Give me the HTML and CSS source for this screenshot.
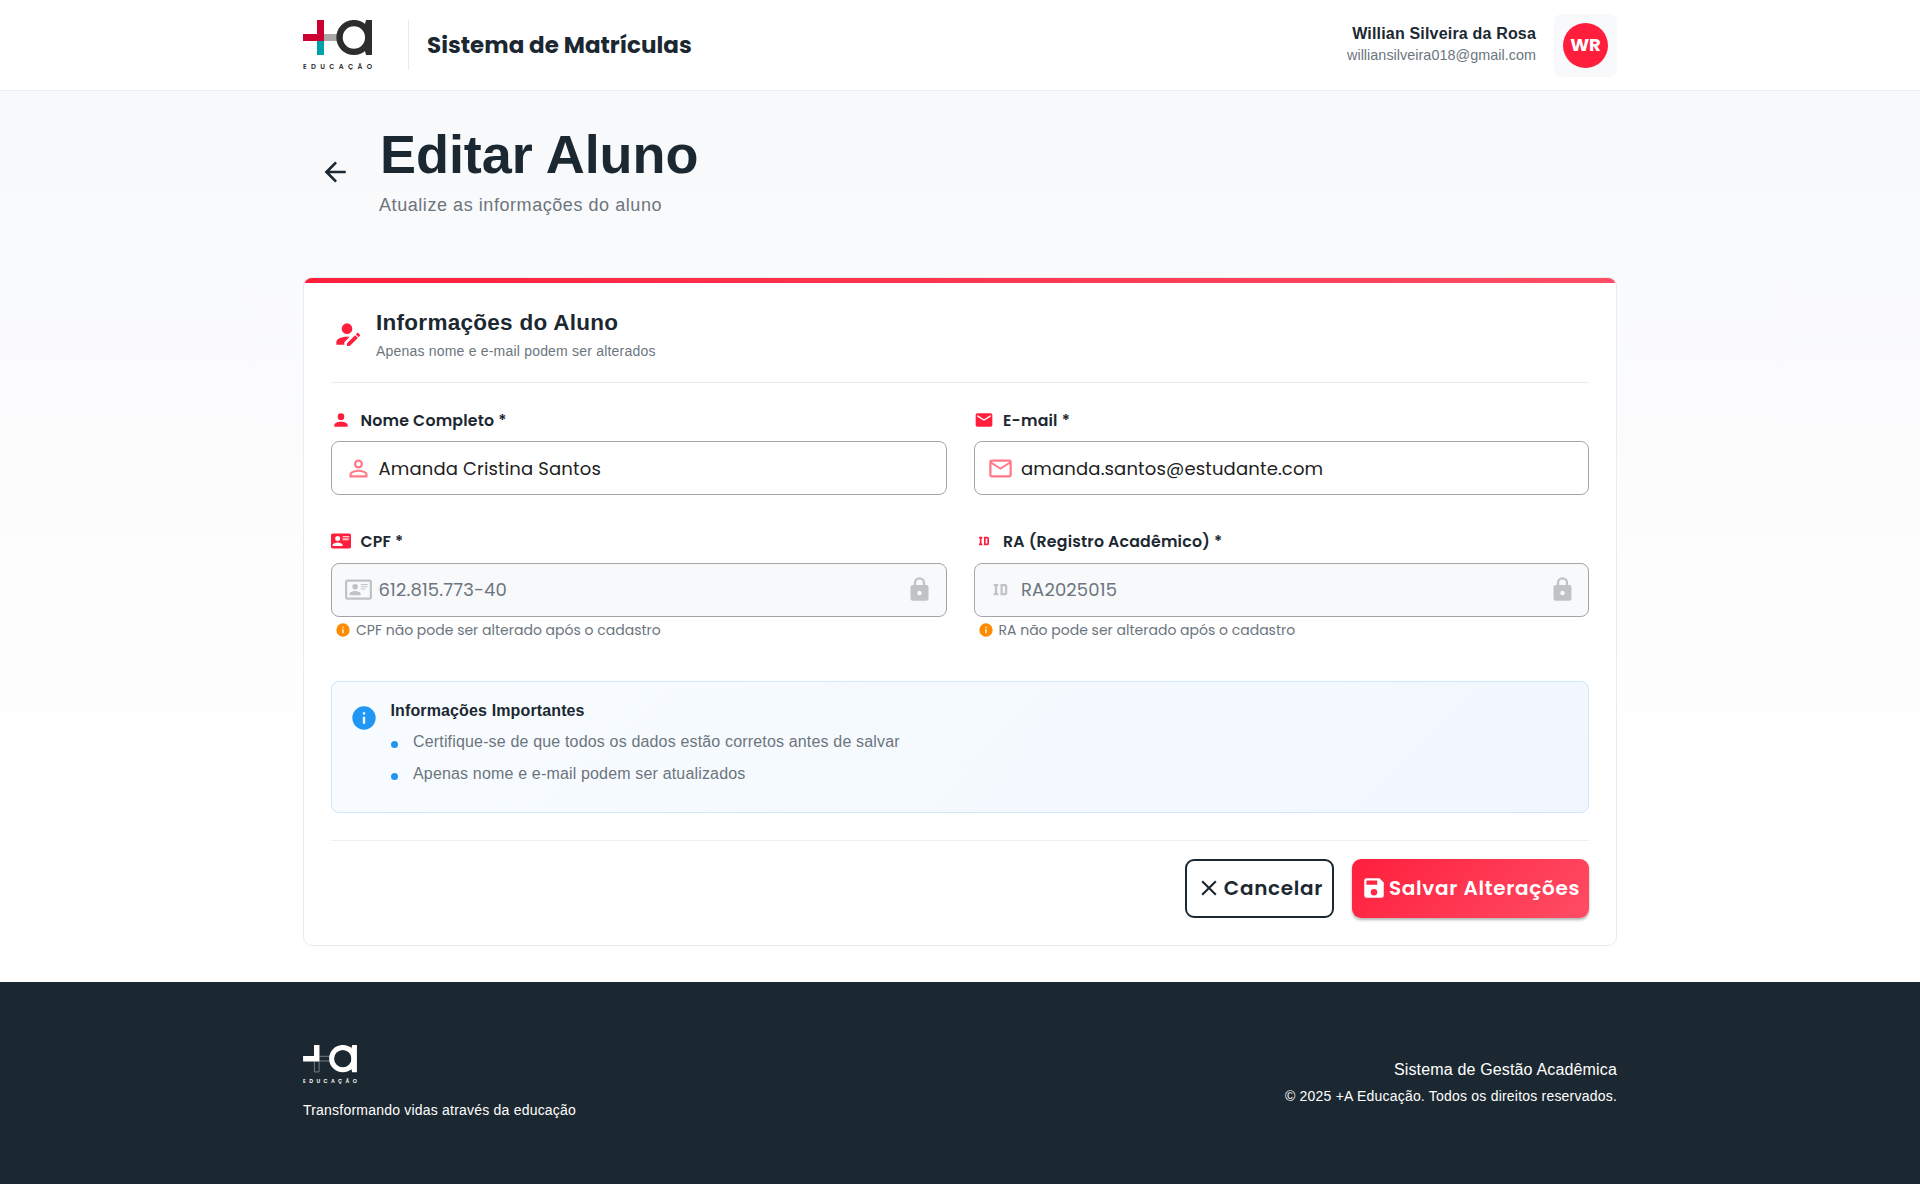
FILE: index.html
```html
<!DOCTYPE html>
<html lang="pt-BR">
<head>
<meta charset="utf-8">
<title>Editar Aluno - Sistema de Matrículas</title>
<link rel="stylesheet" href="styles.css">
</head>
<body>
<header class="topbar">
  <div class="container topbar-inner">
    <svg class="logo" viewBox="0 0 69 50" role="img" aria-label="+A Educação">
      <path fill="#a9a7a7" d="M21 14h14v7H21z"/>
      <path fill="#00a0a8" d="M14 21h7v14h-7z"/>
      <path fill="#cc0033" d="M14 0h7v21H0v-7h14z"/>
      <circle cx="50.9" cy="17.5" r="14.35" fill="none" stroke="#2d2d2d" stroke-width="6.4"/>
      <path fill="#2d2d2d" d="M62 4l1-4h6v35h-6l-1-4z"/>
      <text class="logo-word" x="0" y="49" textLength="69" fill="#2d2d2d">EDUCAÇÃO</text>
    </svg>
    <div class="topbar-divider"></div>
    <div class="system-name">Sistema de Matrículas</div>
    <div class="user">
      <div class="user-text">
        <div class="user-name">Willian Silveira da Rosa</div>
        <div class="user-mail">williansilveira018@gmail.com</div>
      </div>
      <div class="avatar-box"><div class="avatar">WR</div></div>
    </div>
  </div>
</header>

<main class="page">
  <div class="container">
    <div class="page-head">
      <button class="back" aria-label="Voltar"><svg viewBox="0 0 24 24"><path d="M20,11V13H8L13.5,18.5L12.08,19.92L4.16,12L12.08,4.08L13.5,5.5L8,11H20Z"/></svg></button>
      <div>
        <h1>Editar Aluno</h1>
        <p class="page-sub">Atualize as informações do aluno</p>
      </div>
    </div>

    <section class="card">
      <div class="card-bar"></div>
      <div class="card-body">
        <div class="card-head">
          <svg viewBox="0 0 24 24"><path d="M21.7,13.35L20.7,14.35L18.65,12.3L19.65,11.3C19.86,11.09 20.21,11.09 20.42,11.3L21.7,12.58C21.91,12.79 21.91,13.14 21.7,13.35M12,18.94L18.06,12.88L20.11,14.93L14.06,21H12V18.94M12,14C7.58,14 4,15.79 4,18V20H10V18.11L14,14.11C13.34,14.03 12.67,14 12,14M12,4A4,4 0 0,0 8,8A4,4 0 0,0 12,12A4,4 0 0,0 16,8A4,4 0 0,0 12,4Z"/></svg>
          <div>
            <h2>Informações do Aluno</h2>
            <p class="card-sub">Apenas nome e e-mail podem ser alterados</p>
          </div>
        </div>

        <div class="fields">
          <div class="field">
            <div class="label"><svg viewBox="0 0 24 24"><path d="M12,4A4,4 0 0,1 16,8A4,4 0 0,1 12,12A4,4 0 0,1 8,8A4,4 0 0,1 12,4M12,14C16.42,14 20,15.79 20,18V20H4V18C4,15.79 7.58,14 12,14Z"/></svg><span>Nome Completo *</span></div>
            <div class="input"><svg viewBox="0 0 24 24"><path d="M12,4A4,4 0 0,1 16,8A4,4 0 0,1 12,12A4,4 0 0,1 8,8A4,4 0 0,1 12,4M12,6A2,2 0 0,0 10,8A2,2 0 0,0 12,10A2,2 0 0,0 14,8A2,2 0 0,0 12,6M12,13C14.67,13 20,14.33 20,17V20H4V17C4,14.33 9.33,13 12,13M12,14.9C9.03,14.9 5.9,16.36 5.9,17V18.1H18.1V17C18.1,16.36 14.97,14.9 12,14.9Z"/></svg><span>Amanda Cristina Santos</span></div>
          </div>
          <div class="field">
            <div class="label"><svg viewBox="0 0 24 24"><path d="M20,8L12,13L4,8V6L12,11L20,6M20,4H4C2.89,4 2,4.89 2,6V18A2,2 0 0,0 4,20H20A2,2 0 0,0 22,18V6C22,4.89 21.1,4 20,4Z"/></svg><span>E-mail *</span></div>
            <div class="input"><svg viewBox="0 0 24 24"><path d="M22 6C22 4.9 21.1 4 20 4H4C2.9 4 2 4.9 2 6V18C2 19.1 2.9 20 4 20H20C21.1 20 22 19.1 22 18V6M20 6L12 11L4 6H20M20 18H4V8L12 13L20 8V18Z"/></svg><span>amanda.santos@estudante.com</span></div>
          </div>
          <div class="field field-locked">
            <div class="label"><svg viewBox="0 0 24 24"><path d="M2,3H22C23.05,3 24,3.95 24,5V19C24,20.05 23.05,21 22,21H2C0.95,21 0,20.05 0,19V5C0,3.95 0.95,3 2,3M14,6V7H22V6H14M14,8V9H22V8H14M14,10V11H21V10H14M8,13.91C6,13.91 2,15 2,17V18H14V17C14,15 10,13.91 8,13.91M8,6A3,3 0 0,0 5,9A3,3 0 0,0 8,12A3,3 0 0,0 11,9A3,3 0 0,0 8,6Z"/></svg><span>CPF *</span></div>
            <div class="input"><svg viewBox="0 0 24 24"><path d="M22,3H2C0.91,3.04 0.04,3.91 0,5V19C0.04,20.09 0.91,20.96 2,21H22C23.09,20.96 23.96,20.09 24,19V5C23.96,3.91 23.09,3.04 22,3M22,19H2V5H22V19M14,17V15.75C14,14.09 10.66,13.25 9,13.25C7.34,13.25 4,14.09 4,15.75V17H14M9,7A2.5,2.5 0 0,0 6.5,9.5A2.5,2.5 0 0,0 9,12A2.5,2.5 0 0,0 11.5,9.5A2.5,2.5 0 0,0 9,7M14,7V8H20V7H14M14,9V10H20V9H14M14,11V12H18V11H14"/></svg><span>612.815.773-40</span><svg class="lock" viewBox="0 0 24 24"><path d="M12,17A2,2 0 0,0 14,15C14,13.89 13.1,13 12,13A2,2 0 0,0 10,15A2,2 0 0,0 12,17M18,8A2,2 0 0,1 20,10V20A2,2 0 0,1 18,22H6A2,2 0 0,1 4,20V10C4,8.89 4.9,8 6,8H7V6A5,5 0 0,1 12,1A5,5 0 0,1 17,6V8H18M12,3A3,3 0 0,0 9,6V8H15V6A3,3 0 0,0 12,3Z"/></svg></div>
            <div class="hint"><svg viewBox="0 0 24 24"><path d="M13,9H11V7H13M13,17H11V11H13M12,2A10,10 0 0,0 2,12A10,10 0 0,0 12,22A10,10 0 0,0 22,12A10,10 0 0,0 12,2Z"/></svg><span>CPF não pode ser alterado após o cadastro</span></div>
          </div>
          <div class="field field-locked">
            <div class="label"><svg viewBox="0 0 24 24"><path d="M10 7V9H9V15H10V17H6V15H7V9H6V7H10M16 7C17.11 7 18 7.9 18 9V15C18 16.11 17.11 17 16 17H12V7M16 9H14V15H16V9Z"/></svg><span>RA (Registro Acadêmico) *</span></div>
            <div class="input"><svg viewBox="0 0 24 24"><path d="M10 7V9H9V15H10V17H6V15H7V9H6V7H10M16 7C17.11 7 18 7.9 18 9V15C18 16.11 17.11 17 16 17H12V7M16 9H14V15H16V9Z"/></svg><span>RA2025015</span><svg class="lock" viewBox="0 0 24 24"><path d="M12,17A2,2 0 0,0 14,15C14,13.89 13.1,13 12,13A2,2 0 0,0 10,15A2,2 0 0,0 12,17M18,8A2,2 0 0,1 20,10V20A2,2 0 0,1 18,22H6A2,2 0 0,1 4,20V10C4,8.89 4.9,8 6,8H7V6A5,5 0 0,1 12,1A5,5 0 0,1 17,6V8H18M12,3A3,3 0 0,0 9,6V8H15V6A3,3 0 0,0 12,3Z"/></svg></div>
            <div class="hint"><svg viewBox="0 0 24 24"><path d="M13,9H11V7H13M13,17H11V11H13M12,2A10,10 0 0,0 2,12A10,10 0 0,0 12,22A10,10 0 0,0 22,12A10,10 0 0,0 12,2Z"/></svg><span>RA não pode ser alterado após o cadastro</span></div>
          </div>
        </div>

        <div class="notice">
          <svg viewBox="0 0 24 24"><path d="M13,9H11V7H13M13,17H11V11H13M12,2A10,10 0 0,0 2,12A10,10 0 0,0 12,22A10,10 0 0,0 22,12A10,10 0 0,0 12,2Z"/></svg>
          <div>
            <h3>Informações Importantes</h3>
            <ul>
              <li>Certifique-se de que todos os dados estão corretos antes de salvar</li>
              <li>Apenas nome e e-mail podem ser atualizados</li>
            </ul>
          </div>
        </div>

        <div class="actions">
          <button class="btn btn-cancel"><svg viewBox="0 0 24 24"><path d="M19,6.41L17.59,5L12,10.59L6.41,5L5,6.41L10.59,12L5,17.59L6.41,19L12,13.41L17.59,19L19,17.59L13.41,12L19,6.41Z"/></svg><span>Cancelar</span></button>
          <button class="btn btn-save"><svg viewBox="0 0 24 24"><path d="M15,9H5V5H15M12,19A3,3 0 0,1 9,16A3,3 0 0,1 12,13A3,3 0 0,1 15,16A3,3 0 0,1 12,19M17,3H5C3.89,3 3,3.9 3,5V19A2,2 0 0,0 5,21H19A2,2 0 0,0 21,19V7L17,3Z"/></svg><span>Salvar Alterações</span></button>
        </div>
      </div>
    </section>
  </div>
</main>

<footer class="footer">
  <div class="container footer-inner">
    <div class="footer-brand">
      <svg class="footer-logo" viewBox="0 0 69 50" role="img" aria-label="+A Educação">
        <path fill="none" stroke="#8d9499" stroke-width="1" d="M21 14.5h14M21 20.5h14M14.5 21v13.5h6V21"/>
        <path fill="#fff" d="M14 0h7v21H0v-7h14z"/>
        <circle cx="50.9" cy="17.5" r="14.35" fill="none" stroke="#fff" stroke-width="6.4"/>
        <path fill="#fff" d="M62 4l1-4h6v35h-6l-1-4z"/>
        <text class="logo-word" x="0" y="49" textLength="69" fill="#fff">EDUCAÇÃO</text>
      </svg>
      <p class="tagline">Transformando vidas através da educação</p>
    </div>
    <div class="footer-legal">
      <p class="legal-title">Sistema de Gestão Acadêmica</p>
      <p class="legal-copy">© 2025 +A Educação. Todos os direitos reservados.</p>
    </div>
  </div>
</footer>
</body>
</html>
```
FILE: styles.css
```css
* { box-sizing: border-box; }
body {
  margin: 0;
  min-height: 1184px;
  display: flex;
  flex-direction: column;
  font-family: "Liberation Sans", Arial, sans-serif;
  color: #1c2831;
  background: #fff;
}
h1, h2, h3, p, ul { margin: 0; padding: 0; }
svg { display: block; flex: none; fill: currentColor; }
button { font: inherit; color: inherit; background: none; border: 0; padding: 0; }
.container { width: 1314px; margin: 0 auto; }

.system-name, .avatar, .label, .input, .hint, .btn, .logo-word {
  font-family: Poppins, Inter, sans-serif;
  font-feature-settings: "cv11";
}

/* Header */
.topbar { background: #fff; border-bottom: 1px solid #e9ecef; }
.topbar-inner { height: 90px; display: flex; align-items: center; }
.logo { width: 69px; height: 50px; }
.logo-word { font-size: 6.8px; font-weight: 600; }
.topbar-divider { width: 1px; height: 50px; margin: 0 18px 0 36px; background: #e9ecef; }
.system-name { font-size: 23px; font-weight: 700; line-height: 30px; }
.user { margin-left: auto; display: flex; align-items: center; gap: 18px; }
.user-text { text-align: right; padding-bottom: 2px; }
.user-name { font-size: 16px; font-weight: 700; line-height: 22px; letter-spacing: 0.18px; }
.user-mail { font-size: 14.4px; line-height: 21px; color: #6c757d; letter-spacing: 0.03px; }
.avatar-box { width: 63px; height: 63px; border-radius: 8px; background: #f8f9fb; display: grid; place-items: center; }
.avatar {
  width: 45px; height: 45px; border-radius: 50%;
  background: #ff1f3d; color: #fff;
  display: grid; place-items: center;
  font-size: 18px; font-weight: 700; line-height: 1;
}

/* Page heading */
.page { height: 891px; padding-top: 31px; background: linear-gradient(180deg, #f8f9fb 0%, #fff 85%); }
.page-head { display: flex; align-items: center; gap: 12px; height: 96px; margin-bottom: 59px; }
.back { width: 64px; height: 64px; display: grid; place-items: center; margin-top: 4px; }
.back svg { width: 32px; height: 32px; }
h1 { font-size: 54px; line-height: 65px; font-weight: 700; padding-left: 1px; letter-spacing: -0.05px; }
.page-sub { font-size: 18px; line-height: 26px; margin-top: 5px; color: #6c757d; letter-spacing: 0.56px; }

/* Card */
.card { height: 669px; border: 1px solid #e9ecef; border-radius: 9px; background: #fff; overflow: hidden; }
.card-bar { height: 5px; background: linear-gradient(90deg, #ff1f3d, #ff4d65); }
.card-body { padding: 25px 27px 0; }
.card-head { display: flex; align-items: center; gap: 13px; padding-bottom: 21px; border-bottom: 1px solid #e9ecef; }
.card-head svg { width: 32px; height: 32px; margin-bottom: 2px; color: #ff1f3d; }
h2 { font-size: 22.5px; line-height: 28px; padding-top: 1px; letter-spacing: 0.28px; }
.card-sub { font-size: 14px; line-height: 20px; margin-top: 4px; color: #6c757d; letter-spacing: 0.2px; }

/* Fields */
.fields { display: grid; grid-template-columns: 1fr 1fr; gap: 34px 27px; padding-top: 25px; }
.label { display: flex; align-items: center; gap: 9.5px; height: 24px; margin-bottom: 9px; font-size: 15.75px; font-weight: 600; letter-spacing: 0.2px; }
.label svg { width: 20px; height: 20px; color: #ff1f3d; }
.input {
  height: 54px; padding: 0 12.5px; display: flex; align-items: center; gap: 7px;
  border: 1px solid #a3a5a7; border-radius: 8px; background: #fff; color: #212121;
  font-size: 18px; letter-spacing: 0.15px;
}
.input span { padding-top: 1px; }
.input svg { width: 27px; height: 27px; color: #ff7989; }
.field-locked .label { margin-bottom: 10px; }
.field-locked .input { background: #f8f9fb; color: #6c757d; }
.field-locked .input span { padding: 0 0 1px; }
.field-locked .input svg { color: #c1c2c3; margin-bottom: 1px; }
.field-locked .input .lock { margin-left: auto; }
.hint { display: flex; align-items: center; gap: 5px; height: 20px; margin: 3px 0 0 4px; font-size: 14px; color: #6c757d; }
.hint svg { width: 16px; height: 16px; color: #ff8c00; }

/* Notice */
.notice {
  display: flex; gap: 13px; height: 132px; margin-top: 41px; padding: 17px 18px;
  border: 1px solid #cfe7fb; border-radius: 8px;
  background: linear-gradient(135deg, #f8fcff 0%, #f2f7ff 100%);
}
.notice svg { width: 28px; height: 28px; margin: 5px 0 0 -0.5px; color: #2196f3; }
h3 { font-size: 16px; line-height: 24px; letter-spacing: 0.13px; }
.notice ul { list-style: none; margin-top: 3px; }
.notice li { display: flex; align-items: center; gap: 15.5px; line-height: 32px; font-size: 16px; color: #6c757d; letter-spacing: 0.165px; }
.notice li::before { content: ""; width: 7px; height: 7px; margin-top: 5px; border-radius: 50%; background: #2196f3; }

/* Actions */
.actions { display: flex; justify-content: flex-end; gap: 18px; margin-top: 27px; padding-top: 18px; border-top: 1px solid #eceef0; }
.btn { height: 59px; display: flex; align-items: center; justify-content: center; gap: 2px; border-radius: 9px; font-size: 20px; font-weight: 600; white-space: nowrap; }
.btn span { padding-bottom: 1px; }
.btn svg { width: 26px; height: 26px; margin-bottom: 1px; }
.btn-cancel { width: 149px; border: 2px solid #1c2831; letter-spacing: 0.7px; }
.btn-save {
  width: 237px; color: #fff; letter-spacing: 0.7px;
  background: linear-gradient(135deg, #ff1f3d, #ff4d65);
  box-shadow: 0 2px 3px rgba(0, 0, 0, 0.3);
}

/* Footer */
.footer { flex: 1; background: #1c2831; color: #fff; }
.footer-inner { display: flex; align-items: center; justify-content: space-between; padding-top: 61px; }
.footer-brand { height: 80px; padding-top: 2px; }
.footer-logo { width: 54px; height: 39px; }
.tagline { font-size: 14px; line-height: 20px; margin-top: 16px; letter-spacing: 0.21px; }
.footer-legal { text-align: right; }
.legal-title { font-size: 16px; line-height: 26px; letter-spacing: 0.16px; }
.legal-copy { font-size: 14px; line-height: 27px; letter-spacing: 0.21px; }
```
